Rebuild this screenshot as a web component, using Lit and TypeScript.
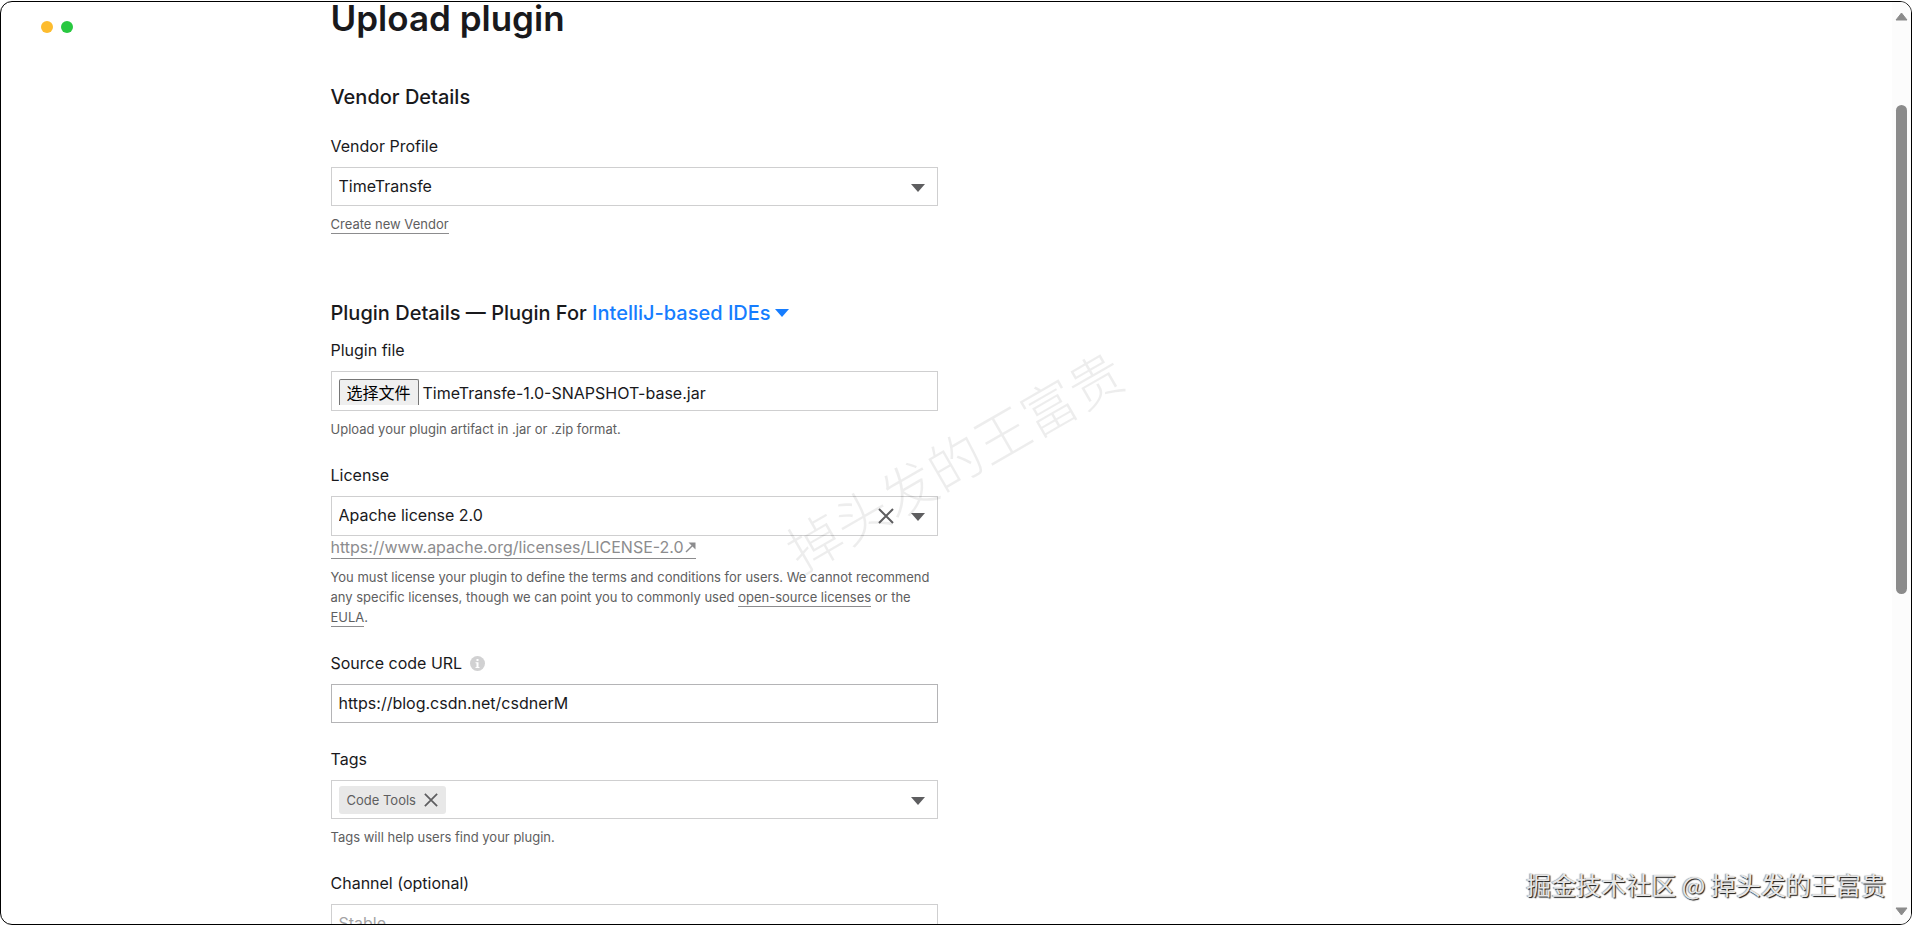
import { LitElement, html, css, svg } from "lit";
import { customElement, state } from "lit/decorators.js";

const cross = (size: number) => html`<svg width=${size} height=${size} viewBox="0 0 16 16" aria-hidden="true">
  ${svg`<path d="M1 1 15 15M15 1 1 15" fill="none" stroke="currentColor" stroke-width="2"/>`}
</svg>`;

const caret = html`<svg class="caret" width="14" height="8" viewBox="0 0 14 8" aria-hidden="true"><path d="M0 0H14L7 8Z" fill="currentColor"/></svg>`;

@customElement("app-root")
export class AppRoot extends LitElement {
  @state() private license = "Apache license 2.0";
  @state() private tags = ["Code Tools"];

  static styles = css`
    :host {
      display: block;
      box-sizing: border-box;
      height: 100vh;
      padding-top: 1px;
      font-family: Inter, "Noto Sans CJK SC", sans-serif;
      font-size: 16px;
      line-height: 24px;
      color: #19191c;
      background: #fff;
    }
    * { box-sizing: border-box; }
    h1, h2, p { margin: 0; }
    .window {
      position: relative;
      display: flex;
      height: 100%;
      overflow: hidden;
      border: 1px solid #000;
      border-radius: 12px;
      background: #fff;
    }
    .dots {
      position: absolute;
      top: 19px;
      left: 40px;
      display: flex;
      gap: 8px;
    }
    .dot { width: 12px; height: 12px; border-radius: 50%; }
    .amber { background: #fdbc2e; }
    .green { background: #28c840; }
    .view { flex: 1; min-width: 0; overflow: hidden; }
    .columns {
      display: grid;
      grid-template-columns: 1fr 1fr;
      gap: 18px;
      max-width: 1232px;
      margin: 0 auto;
    }
    h1 { font-size: 35px; line-height: 32px; font-weight: 600; margin-bottom: 49px; }
    h2 { font-size: 20px; line-height: 28px; font-weight: 550; }
    .vendor-title { margin-bottom: 23px; }
    .plugin-title { margin: 65px 0 11px; }
    .field + .field { margin-top: 24px; }
    .label { display: flex; align-items: center; gap: 8px; margin-bottom: 9px; }
    .hint { margin-top: 8px; font-size: 13px; line-height: 20px; color: #5e5e60; }
    a { color: inherit; text-decoration: none; border-bottom: 1px solid #8c8c8e; padding-bottom: 1px; }
    .url { display: flex; color: #8c8c8e; }
    .url a { line-height: 22px; padding: 0; }
    .hint a { padding: 0 0 1px; }
    .box {
      display: grid;
      grid-template-columns: 1fr auto auto;
      align-items: center;
      height: 39px;
      border: 1px solid #cfcfd0;
      background: #fff;
    }
    .box.strong { border-color: #b4b4b6; }
    .box.tall { height: 40px; }
    .control {
      grid-area: 1 / 1 / 2 / -1;
      width: 100%;
      height: 37px;
      margin: 0;
      padding: 0 7px 1px;
      border: 0;
      outline: 0;
      appearance: none;
      background: transparent;
      font: inherit;
      color: inherit;
    }
    .control::placeholder { color: #a3a3a4; }
    select.control { padding-bottom: 2px; }
    .caret { grid-area: 1 / 3; margin-right: 12px; color: #5e5e60; pointer-events: none; margin-top: 2px; }
    .icon-button {
      display: grid;
      padding: 0;
      border: 0;
      background: none;
      color: #5e5e60;
      cursor: pointer;
    }
    .clear { grid-area: 1 / 2; margin-right: 17px; z-index: 1; }
    .type {
      display: inline-flex;
      align-items: center;
      gap: 4px;
      padding: 0;
      border: 0;
      background: none;
      font: inherit;
      color: #167dff;
    }
    .type .caret { margin: 0; color: #167dff; }
    .file { display: flex; align-items: flex-start; padding: 7px 7px 0; gap: 4px; }
    .choose {
      height: 26px;
      padding: 0 7px;
      border: 1px solid #767676;
      border-bottom: 0;
      border-radius: 2px 2px 0 0;
      background: #efefef;
      color: #000;
      font: inherit;
      line-height: 26px;
    }
    .filename { line-height: 28px; }
    .chip {
      grid-area: 1 / 1;
      justify-self: start;
      display: flex;
      align-items: center;
      gap: 8px;
      height: 28px;
      margin-left: 7px;
      padding: 0 8px;
      border-radius: 3px;
      background: #e8e8e8;
      font-size: 13px;
      color: #5e5e60;
      z-index: 1;
    }
    .scrollbar {
      display: flex;
      flex-direction: column;
      align-items: center;
      width: 19px;
      padding: 10px 0 8px;
      background: #fcfcfc;
      color: #8b8b8b;
    }
    .thumb { flex: 0 0 54%; width: 11px; border-radius: 6px; background: #8b8b8b; }
    .before { flex: 84; }
    .after { flex: 312; }
    .mark {
      position: absolute;
      inset: 0;
      display: grid;
      place-items: center;
      pointer-events: none;
      z-index: 2;
    }
    .mark span {
      transform: rotate(-30deg);
      font-size: 54px;
      font-weight: 300;
      line-height: 60px;
      color: rgba(0, 0, 0, 0.07);
      white-space: nowrap;
    }
    .credit {
      position: absolute;
      right: 25px;
      bottom: 22px;
      font-family: "Noto Sans CJK SC", sans-serif;
      font-size: 25px;
      line-height: 36px;
      color: #e6e6e6;
      text-shadow: 1px 1px 1px #111, -1px 0 1px #999;
      pointer-events: none;
    }
  `;

  private select(id: string, value: string, clearable = false) {
    return html`<div class="box ${clearable ? "tall" : ""}">
      <select class="control" id=${id}>
        <option>${value}</option>
      </select>
      ${clearable
        ? html`<button class="icon-button clear" type="button" aria-label="Clear" @click=${() => (this.license = "")}>${cross(16)}</button>`
        : null}
      ${caret}
    </div>`;
  }

  render() {
    return html`<div class="window">
      <div class="dots"><span class="dot amber"></span><span class="dot green"></span></div>
      <main class="view">
        <div class="columns">
          <form>
            <h1>Upload plugin</h1>

            <h2 class="vendor-title">Vendor Details</h2>
            <div class="field">
              <label class="label" for="vendor">Vendor Profile</label>
              ${this.select("vendor", "TimeTransfe")}
              <p class="hint"><a href="#">Create new Vendor</a></p>
            </div>

            <h2 class="plugin-title">
              Plugin Details — Plugin For <button class="type" type="button">IntelliJ-based IDEs ${caret}</button>
            </h2>
            <div class="field">
              <label class="label" for="file">Plugin file</label>
              <div class="box tall file">
                <button class="choose" id="file" type="button">选择文件</button>
                <span class="filename">TimeTransfe-1.0-SNAPSHOT-base.jar</span>
              </div>
              <p class="hint">Upload your plugin artifact in .jar or .zip format.</p>
            </div>

            <div class="field">
              <label class="label" for="license">License</label>
              ${this.select("license", this.license, true)}
              <div class="url"><a href="#">https://www.apache.org/licenses/LICENSE-2.0<svg width="12" height="12" viewBox="0 0 12 12" aria-hidden="true"><path d="M2 11 10 3" fill="none" stroke="currentColor" stroke-width="1.4"/><path d="M4.500 1.500H11.500V8.500Z" fill="currentColor"/></svg></a></div>
              <p class="hint">
                You must license your plugin to define the terms and conditions for users. We cannot recommend any
                specific licenses, though we can point you to commonly used <a href="#">open-source licenses</a> or the
                <a href="#">EULA</a>.
              </p>
            </div>

            <div class="field">
              <label class="label" for="source">Source code URL
                <svg width="15" height="15" viewBox="0 0 15 15" aria-hidden="true">
                  <circle cx="7.5" cy="7.5" r="7.5" fill="#d1d1d2" />
                  <path d="M6.500 3h2v2h-2ZM5.500 6.200h3V11h1v1h-4v-1h1V7.200h-1Z" fill="#fff" />
                </svg>
              </label>
              <div class="box strong">
                <input class="control" id="source" type="text" value="https://blog.csdn.net/csdnerM" />
              </div>
            </div>

            <div class="field">
              <label class="label" for="tags">Tags</label>
              <div class="box">
                <input class="control" id="tags" type="text" />
                ${this.tags.map(
                  (tag) => html`<span class="chip">${tag}<button
                      class="icon-button" type="button" aria-label="Remove"
                      @click=${() => (this.tags = this.tags.filter((t) => t !== tag))}
                    >${cross(14)}</button></span>`
                )}
                ${caret}
              </div>
              <p class="hint">Tags will help users find your plugin.</p>
            </div>

            <div class="field">
              <label class="label" for="channel">Channel (optional)</label>
              <div class="box">
                <input class="control" id="channel" type="text" placeholder="Stable" />
              </div>
            </div>
          </form>
        </div>
      </main>
      <div class="scrollbar" aria-hidden="true">
        <svg width="13" height="9" viewBox="0 0 13 9"><path d="M6.5 1 12 8H1Z" fill="currentColor" stroke="currentColor" stroke-linejoin="round" /></svg>
        <span class="before"></span>
        <span class="thumb"></span>
        <span class="after"></span>
        <svg width="13" height="9" viewBox="0 0 13 9"><path d="M6.5 8 12 1H1Z" fill="currentColor" stroke="currentColor" stroke-linejoin="round" /></svg>
      </div>
      <div class="mark" lang="zh-CN"><span>掉头发的王富贵</span></div>
      <div class="credit" lang="zh-CN">掘金技术社区 @ 掉头发的王富贵</div>
    </div>`;
  }
}
